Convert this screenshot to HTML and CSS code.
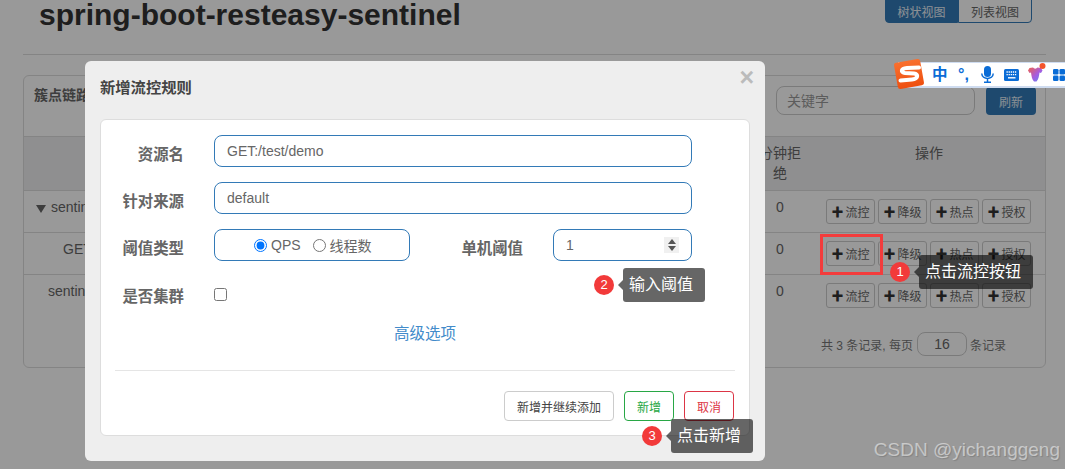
FILE: index.html
```html
<!DOCTYPE html>
<html lang="zh-CN">
<head>
<meta charset="utf-8">
<title>spring-boot-resteasy-sentinel</title>
<link rel="stylesheet" href="styles.css">
</head>
<body>
<div class="page">
  <header class="page-head">
    <h1 class="page-title">spring-boot-resteasy-sentinel</h1>
    <div class="view-switch">
      <button class="view-btn view-btn-active">树状视图</button>
      <button class="view-btn">列表视图</button>
    </div>
  </header>
  <hr class="page-rule">
  <section class="panel">
    <div class="panel-head">
      <span class="panel-title">簇点链路</span>
      <div class="search">
        <input class="search-input" placeholder="关键字">
        <button class="search-btn">刷新</button>
      </div>
    </div>
    <div class="row row-head">
      <span class="cell-name"></span>
      <span class="cell-count">分钟拒<br>绝</span>
      <span class="cell-ops cell-ops-head">操作</span>
    </div>
    <div class="row">
      <span class="cell-name cell-name-root"><i class="caret"></i>sentine</span>
      <span class="cell-count">0</span>
      <div class="cell-ops">
        <button class="op-btn"><b>✚</b>流控</button><button class="op-btn"><b>✚</b>降级</button><button class="op-btn"><b>✚</b>热点</button><button class="op-btn"><b>✚</b>授权</button>
      </div>
    </div>
    <div class="row">
      <span class="cell-name cell-name-child">GET</span>
      <span class="cell-count">0</span>
      <div class="cell-ops">
        <button class="op-btn"><b>✚</b>流控</button><button class="op-btn"><b>✚</b>降级</button><button class="op-btn"><b>✚</b>热点</button><button class="op-btn"><b>✚</b>授权</button>
      </div>
    </div>
    <div class="row row-last">
      <span class="cell-name cell-name-last">sentine</span>
      <span class="cell-count">0</span>
      <div class="cell-ops">
        <button class="op-btn"><b>✚</b>流控</button><button class="op-btn"><b>✚</b>降级</button><button class="op-btn"><b>✚</b>热点</button><button class="op-btn"><b>✚</b>授权</button>
      </div>
    </div>
    <div class="pager">
      <span>共 3 条记录, 每页</span>
      <input class="pager-input" value="16">
      <span>条记录</span>
    </div>
  </section>
</div>

<div class="backdrop"></div>

<div class="modal">
  <div class="modal-head">
    <h2 class="modal-title">新增流控规则</h2>
    <span class="modal-close">×</span>
  </div>
  <div class="modal-card">
    <div class="form-row">
      <label class="form-label">资源名</label>
      <input class="form-input" value="GET:/test/demo">
    </div>
    <div class="form-row">
      <label class="form-label">针对来源</label>
      <input class="form-input" value="default">
    </div>
    <div class="form-row">
      <label class="form-label">阈值类型</label>
      <div class="radio-box">
        <label class="radio-item"><input type="radio" name="grade" checked>QPS</label>
        <label class="radio-item"><input type="radio" name="grade">线程数</label>
      </div>
      <label class="form-label form-label-wide">单机阈值</label>
      <div class="number-wrap">
        <input class="form-input number-input" type="number" value="1">
        <span class="spinner"><i class="spin-up"></i><i class="spin-down"></i></span>
      </div>
    </div>
    <div class="form-row form-row-check">
      <label class="form-label">是否集群</label>
      <input class="check" type="checkbox">
    </div>
    <a class="adv-link">高级选项</a>
    <div class="modal-rule"></div>
    <div class="modal-actions">
      <button class="act-btn">新增并继续添加</button>
      <button class="act-btn act-btn-ok">新增</button>
      <button class="act-btn act-btn-cancel">取消</button>
    </div>
  </div>
</div>

<div class="mark-rect"></div>
<div class="note note-1"><span class="note-badge">1</span><span class="note-tip">点击流控按钮</span></div>
<div class="note note-2"><span class="note-badge">2</span><span class="note-tip">输入阈值</span></div>
<div class="note note-3"><span class="note-badge">3</span><span class="note-tip">点击新增</span></div>

<div class="ime">
  <svg class="ime-logo" width="34" height="34" viewBox="0 0 34 34">
    <defs><linearGradient id="logoFill" x1="0" y1="0" x2="0" y2="1"><stop offset="0" stop-color="#f9702e"/><stop offset="1" stop-color="#ee4f10"/></linearGradient></defs>
    <rect x="3.750" y="3.750" width="26.500" height="26.500" rx="2.500" transform="rotate(-10 17 17)" fill="url(#logoFill)"/>
    <path d="M27 10.500 L15 11 C8.500 11.500 8.500 15.500 13 16 L22 16.500 C27 17 26 22 20 22.500 L8.500 23.500" fill="none" stroke="#fff" stroke-width="4" stroke-linecap="round"/>
  </svg>
  <span class="ime-zh">中</span>
  <span class="ime-punct">°,</span>
  <svg class="ime-icon" width="13" height="17" viewBox="0 0 13 17"><rect x="3" y="0" width="7" height="11" rx="3.500" fill="#0a6cd6"/><path d="M.8 7.500c0 6.500 11.400 6.500 11.400 0M6.500 13v3M3 16.300h7" fill="none" stroke="#0a6cd6" stroke-width="1.500"/></svg>
  <svg class="ime-icon" width="15" height="12" viewBox="0 0 15 12"><rect width="15" height="12" rx="1.500" fill="#0a6cd6"/><path d="M2.500 3h10.500M2.500 5.700h10.500" stroke="#fff" stroke-width="1.300" stroke-dasharray="1.300 .8"/><path d="M4 8.800h7.500" stroke="#fff" stroke-width="1.400"/></svg>
  <svg class="ime-icon ime-shirt" width="18" height="19" viewBox="0 0 18 19">
    <defs><linearGradient id="shirtFill" x1="0" y1="0" x2="1" y2="1"><stop offset="0" stop-color="#f0604a"/><stop offset=".55" stop-color="#a55be0"/><stop offset="1" stop-color="#5a8cf0"/></linearGradient></defs>
    <path d="M0 7.500l1.500-2.500 3.500-.5c1 1.500 3.500 1.500 4.500 0l3.500.5 1.500 2.500-1.500 2.500-1.500-.5c-.500 4-1 7-3 9H6c-2-2-2.500-5-3-9l-1.500.5z" fill="url(#shirtFill)"/>
    <circle cx="14.500" cy="3" r="3" fill="#f4552c"/>
  </svg>
  <svg class="ime-icon" width="14" height="12" viewBox="0 0 14 12"><rect width="5.500" height="5.500" rx="1.300" fill="#0a6cd6"/><rect x="6.500" width="5.500" height="5.500" rx="1.300" fill="#0a6cd6"/><rect y="6.500" width="5.500" height="5.500" rx="1.300" fill="#0a6cd6"/><rect x="6.500" y="6.500" width="5.500" height="5.500" rx="1.300" fill="#0a6cd6"/></svg>
</div>

<div class="watermark">CSDN @yichanggeng</div>
</body>
</html>
```

FILE: styles.css
```css
* { box-sizing: border-box; }
html, body { margin: 0; height: 469px; overflow: hidden; }
body {
  position: relative;
  background: #fff;
  color: #333;
  font-family: "Liberation Sans", "Noto Sans CJK SC", sans-serif;
  font-size: 14px;
}
button, input { font-family: inherit; }

.page { padding: 0 19px 0 23px; width: 1065px; }
.page-head { display: flex; justify-content: space-between; height: 54px; padding: 0 0 0 16px; }
.page-title { margin: -3px 0 0; font-size: 30px; line-height: 36px; font-weight: 700; color: #333; }
.view-switch { display: flex; height: 23px; margin-right: 14px; margin-left: auto; }
.view-btn { width: 74px; height: 24px; margin-top: -1px; padding: 0; border: 1px solid #337ab7; background: #fff; color: #666; font-size: 12px; border-radius: 0 0 4px 0; }
.view-btn-active { width: 73px; background: #337ab7; color: #eaf1f7; border-radius: 0 0 0 4px; }
.page-rule { margin: 0 0 20px; border: 0; border-top: 1px solid #ddd; }

.panel { border: 1px solid #ddd; border-radius: 6px; height: 293px; }
.panel-head { display: flex; justify-content: space-between; height: 60px; padding: 6px 9px 0 10px; }
.panel-title { font-size: 14px; line-height: 20px; font-weight: 700; color: #666; margin-top: 3px; white-space: nowrap; }
.search { display: flex; gap: 11px; margin-top: 4px; }
.search-input { width: 199px; height: 29px; border: 1px solid #ccc; border-radius: 8px; padding: 0 10px; font-size: 14px; }
.search-input::placeholder { color: #999; opacity: 1; }
.search-btn { width: 50px; height: 28px; margin-top: 1px; border: 0; border-radius: 4px; background: #337ab7; color: #e4edf5; font-size: 12px; }

.row { display: flex; border-top: 1px solid #ddd; height: 42px; padding-top: 8px; }
.row-head { height: 54px; background: #eeeff1; padding-top: 6px; font-size: 14px; color: #666; line-height: 20px; text-align: center; }
.cell-name { width: 735px; flex: none; color: #666; font-size: 14px; }
.cell-name-root { padding: 0 0 0 12px; display: flex; align-items: flex-start; gap: 5px; }
.cell-name-child { padding: 0 0 0 39px; }
.cell-name-last { padding: 0 0 0 24px; }
.caret { width: 0; height: 0; margin-top: 6px; border: 5px solid transparent; border-top: 8px solid #666; border-bottom: 0; }
.cell-count { width: 42px; flex: none; text-align: center; color: #666; font-size: 14px; line-height: 16px; }
.row-head .cell-count { font-size: 14px; line-height: 20px; }
.cell-ops { display: flex; gap: 3px; padding-left: 25px; }
.cell-ops-head { padding-left: 114px; color: #666; }
.op-btn { display: flex; align-items: center; justify-content: center; width: 49px; height: 25px; padding: 0; border: 1px solid #ccc; border-radius: 3px; background: #fff; color: #666; font-size: 12px; }
.op-btn b { font-size: 12px; color: #333; margin-right: 2px; }
.pager { display: flex; align-items: center; justify-content: flex-end; padding: 16px 39px 0 0; font-size: 12px; color: #777; }
.pager-input { width: 50px; height: 24px; margin: 0 3px 0 4px; border: 1px solid #ccc; border-radius: 8px; text-align: center; font-size: 14px; color: #666; padding: 0; }

.backdrop { position: absolute; inset: 0; background: rgba(0, 0, 0, .4); }

.modal { position: absolute; left: 85px; top: 61px; width: 680px; height: 400px; background: #eee; border-radius: 6px; padding: 0 15px; }
.modal-head { position: relative; height: 58px; }
.modal-title { margin: 0; padding-top: 18px; font-size: 15.300px; line-height: 18px; font-weight: 700; color: #444; }
.modal-close { position: absolute; right: -4px; top: 3px; font-size: 25px; line-height: 26px; font-weight: 700; color: #bbb; }
.modal-card { height: 317px; background: #fff; border: 1px solid #ddd; border-radius: 6px; padding: 15px 14px 0; }

.form-row { display: flex; align-items: center; height: 32px; margin-bottom: 15px; }
.form-label { width: 69px; flex: none; margin-right: 30px; padding-top: 3px; text-align: right; font-size: 15.400px; font-weight: 700; color: #666; white-space: nowrap; }
.form-label-wide { width: 73px; margin: 0 30px 0 40px; }
.form-input { width: 478px; height: 32px; border: 1px solid #337ab7; border-radius: 8px; padding: 0 12px; font-size: 14px; color: #666; outline: 0; }
.radio-box { display: flex; align-items: center; gap: 12px; padding-left: 39px; width: 196px; height: 32px; border: 1px solid #337ab7; border-radius: 8px; color: #666; }
.radio-item { display: flex; align-items: center; font-size: 14px; white-space: nowrap; }
.radio-item input { width: 13px; height: 13px; margin: 0 4px 0 0; }
.number-wrap { position: relative; width: 139px; height: 32px; }
.number-input { width: 139px; }
.number-input::-webkit-inner-spin-button { display: none; }
.spinner { position: absolute; right: 13px; top: 8px; width: 15px; height: 16px; background: #f0f0f0; display: flex; flex-direction: column; align-items: center; justify-content: center; gap: 2px; }
.spin-up { width: 0; height: 0; border: 4.500px solid transparent; border-top: 0; border-bottom: 5px solid #555; }
.spin-down { width: 0; height: 0; border: 4.500px solid transparent; border-bottom: 0; border-top: 5px solid #555; }
.form-row-check { height: 13px; margin: 27px 0 0; }
.form-row-check .form-label { padding-top: 0; }
.check { width: 13px; height: 13px; margin: 0; }
.adv-link { display: block; margin-top: 22px; padding-left: 279px; font-size: 15.500px; line-height: 22px; color: #428bca; }
.modal-rule { margin-top: 25px; border-top: 1px solid #e5e5e5; }
.modal-actions { display: flex; justify-content: flex-end; gap: 10px; margin: 20px 1px 0 0; }
.act-btn { height: 30px; width: 110px; padding: 0; background: #fff; border: 1px solid #ccc; border-radius: 4px; color: #444; font-size: 12px; }
.act-btn-ok { width: 50px; border-color: #28a745; color: #28a745; }
.act-btn-cancel { width: 50px; border-color: #dc3545; color: #dc3545; }

.mark-rect { position: absolute; left: 820px; top: 234px; width: 63px; height: 41px; border: 3px solid #f33c3c; }

.note { position: absolute; display: flex; align-items: center; gap: 10px; height: 34px; }
.note-1 { left: 890px; top: 255px; }
.note-2 { left: 594px; top: 268px; }
.note-3 { left: 642px; top: 419px; }
.note-badge { width: 20px; height: 20px; flex: none; border-radius: 50%; background: #f23a3a; color: #fff; font-size: 13px; line-height: 20px; text-align: center; }
.note-tip { position: relative; height: 34px; margin-left: -1px; padding: 0 12px 0 6px; border-radius: 3px; background: rgba(0, 0, 0, .6); color: #fff; font-size: 16px; line-height: 34px; white-space: nowrap; }
.note-tip::before { content: ""; position: absolute; left: -5px; top: 12px; border: 5px solid transparent; border-left: 0; border-right-color: rgba(0, 0, 0, .6); }

.ime { position: absolute; left: 898px; top: 62px; width: 167px; height: 26px; display: flex; align-items: center; padding-left: 34px; background: #fff; border: 1px solid #cfdcf0; border-width: 1px 0 2px; overflow: visible; }
.ime-logo { position: absolute; left: -6px; top: -6px; }
.ime-zh { flex: none; width: 15px; margin-right: 11px; font-size: 15.500px; font-weight: 700; color: #0a6cd6; line-height: 1; }
.ime-punct { flex: none; width: 23px; font-size: 16px; font-weight: 700; color: #0a6cd6; line-height: 1; }
.ime-icon { flex: none; margin-right: 10px; }
.ime-shirt { margin-top: -4px; margin-right: 7px; margin-left: -1px; }

.watermark { position: absolute; right: 5px; bottom: 8px; font-size: 19px; line-height: 22px; color: rgba(255, 255, 255, .5); text-shadow: 1px 1px 1px rgba(0, 0, 0, .15); }
```
